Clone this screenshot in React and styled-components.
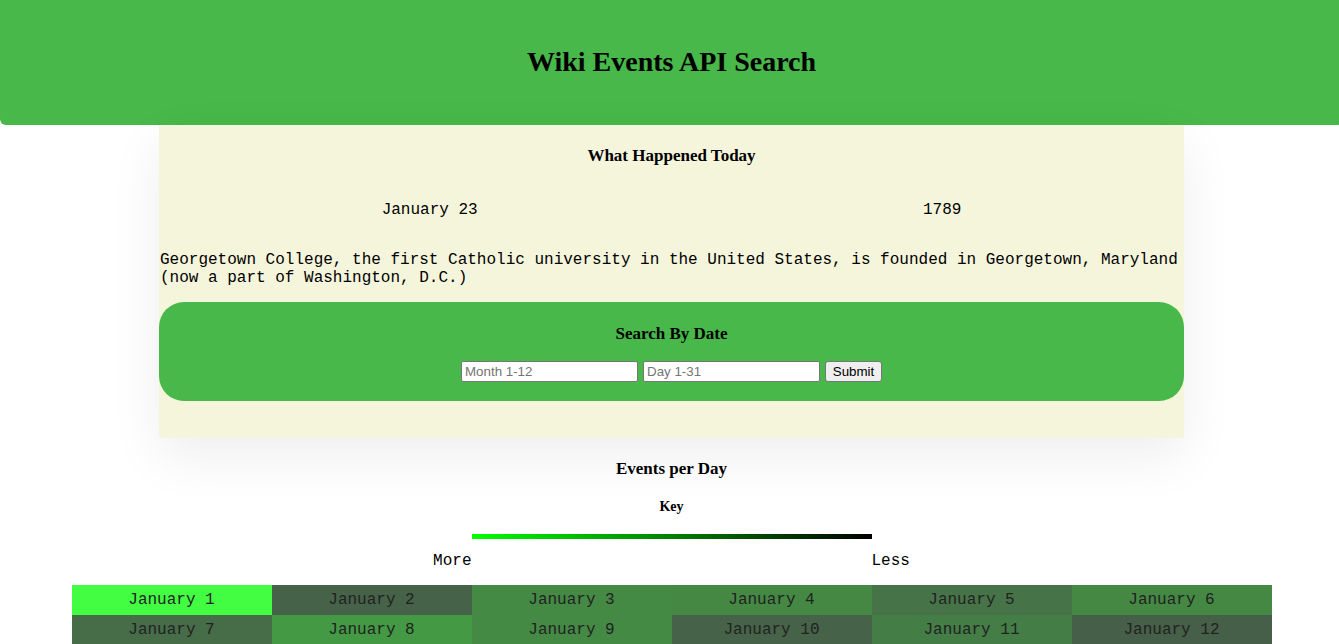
import React from "react";
import styled, { createGlobalStyle } from "styled-components";

const days = [
	{ label: "January 1", color: "#43fd43" },
	{ label: "January 2", color: "#466349" },
	{ label: "January 3", color: "#448a44" },
	{ label: "January 4", color: "#448844" },
	{ label: "January 5", color: "#467448" },
	{ label: "January 6", color: "#448844" },
	{ label: "January 7", color: "#466c48" },
	{ label: "January 8", color: "#449944" },
	{ label: "January 9", color: "#448a44" },
	{ label: "January 10", color: "#466349" },
	{ label: "January 11", color: "#447d46" },
	{ label: "January 12", color: "#465f48" },
];

function App() {
	return (
		<>
			<GlobalStyle />
			<Page>
				<Header>
					<Title>Wiki Events API Search</Title>
				</Header>
				<Card>
					<Heading $top={21}>What Happened Today</Heading>
					<DateRow>
						<Mono>January 23</Mono>
						<Mono>1789</Mono>
					</DateRow>
					<Desc>
						Georgetown College, the first Catholic university in the United
						States, is founded in Georgetown, Maryland (now a part of
						Washington, D.C.)
					</Desc>
					<SearchBox>
						<Heading $top={22}>Search By Date</Heading>
						<Form onSubmit={(e) => e.preventDefault()}>
							<Input placeholder="Month 1-12" />
							<Input placeholder="Day 1-31" />
							<Button type="submit">Submit</Button>
						</Form>
					</SearchBox>
				</Card>
				<Heading $top={21}>Events per Day</Heading>
				<KeyTitle>Key</KeyTitle>
				<KeyGrid>
					<Bar />
					<More>More</More>
					<Less>Less</Less>
				</KeyGrid>
				<DayGrid>
					{days.map((d, i) => (
						<Day key={i} $color={d.color}>
							{d.label}
						</Day>
					))}
				</DayGrid>
			</Page>
		</>
	);
}

export default App;

const GlobalStyle = createGlobalStyle`
	body {
		margin: 0;
		overflow: hidden;
		background: #fff;
		font-family: "Liberation Serif", serif;
	}
`;

const Page = styled.div`
	width: 1343px;
	display: flex;
	flex-direction: column;
`;

const Header = styled.header`
	height: 125px;
	background: #47b849;
	border-radius: 0 0 6px 6px;
	display: flex;
	align-items: center;
	justify-content: center;
`;

const Title = styled.h1`
	margin: 0;
	font-size: 28px;
	font-weight: bold;
	line-height: 1;
	padding-bottom: 2px;
`;

const Card = styled.section`
	width: 1025px;
	margin: 0 auto;
	background: #f5f5dc;
	padding-bottom: 37px;
	box-shadow: 0 18px 50px rgba(0, 0, 0, 0.07);
`;

const Heading = styled.h3`
	margin: ${(p) => p.$top}px 0 0;
	font-size: 17px;
	line-height: 20px;
	text-align: center;
	font-weight: bold;
`;

const DateRow = styled.div`
	display: flex;
	justify-content: space-around;
	margin-top: 35px;
`;

const Mono = styled.span`
	font-family: "Liberation Mono", monospace;
	font-size: 16px;
	line-height: 18px;
`;

const Desc = styled.p`
	margin: 32px 0 0 1px;
	font-family: "Liberation Mono", monospace;
	font-size: 16px;
	line-height: 18px;
`;

const SearchBox = styled.div`
	margin-top: 15px;
	height: 99px;
	box-sizing: border-box;
	background: #47b849;
	border-radius: 25px;
	overflow: hidden;
`;

const Form = styled.form`
	display: flex;
	justify-content: center;
	gap: 5px;
	margin-top: 17px;
`;

const Input = styled.input`
	width: 177px;
	height: 21px;
	box-sizing: border-box;
	border: 1px solid #767676;
	border-radius: 2px;
	padding: 1px 3px;
	font-family: "Liberation Sans", sans-serif;
	font-size: 13.33px;
	background: #fff;
	&::placeholder {
		color: #757575;
	}
`;

const Button = styled.button`
	width: 57px;
	height: 21px;
	box-sizing: border-box;
	border: 1px solid #767676;
	border-radius: 3px;
	background: #efefef;
	font-family: "Liberation Sans", sans-serif;
	font-size: 13.33px;
	padding: 0;
	color: #000;
`;

const KeyTitle = styled.h4`
	margin: 19px 0 0;
	font-size: 14px;
	line-height: 18px;
	text-align: center;
	font-weight: bold;
`;

const KeyGrid = styled.div`
	display: grid;
	grid-template-columns: 38.4px 400px 38.4px;
	grid-template-rows: 5px auto;
	row-gap: 13px;
	justify-content: center;
	margin-top: 18px;
`;

const Bar = styled.div`
	grid-column: 2;
	grid-row: 1;
	background: linear-gradient(to right, #00ff00, #000000);
`;

const More = styled.span`
	grid-column: 1;
	grid-row: 2;
	font-family: "Liberation Mono", monospace;
	font-size: 16px;
	line-height: 18px;
`;

const Less = styled(More)`
	grid-column: 3;
`;

const DayGrid = styled.div`
	display: grid;
	grid-template-columns: repeat(6, 200px);
	grid-auto-rows: 30px;
	justify-content: center;
	margin-top: 15px;
`;

const Day = styled.div`
	background: ${(p) => p.$color};
	color: #222;
	font-family: "Liberation Mono", monospace;
	font-size: 16px;
	line-height: 30px;
	text-align: center;
`;
